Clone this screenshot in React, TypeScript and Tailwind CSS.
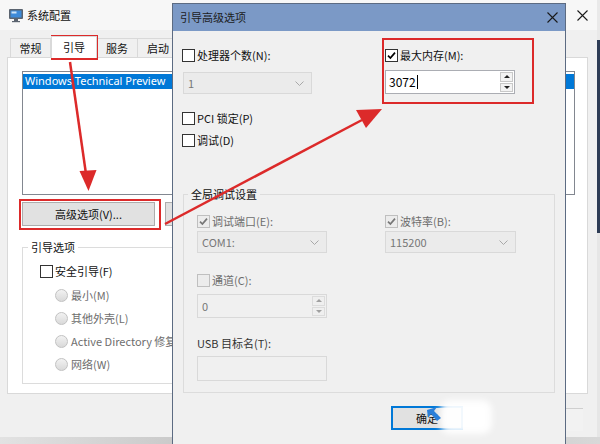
import clsx from "clsx"

const cjk = "font-['Noto_Sans_CJK_SC','Noto_Sans',sans-serif]"

function Check({ checked = false, disabled = false }: { checked?: boolean; disabled?: boolean }) {
  return (
    <span
      className={clsx(
        "flex h-[13px] w-[13px] shrink-0 items-center justify-center border",
        disabled ? "border-[#bfbfbf] bg-[#ececec]" : "border-[#333333] bg-white"
      )}
    >
      {checked && (
        <svg viewBox="0 0 11 11" className="h-[11px] w-[11px]">
          <path d="M2 5.6 L4.4 8 L9 2.6" fill="none" stroke={disabled ? "#777777" : "#000000"} strokeWidth="1.7" />
        </svg>
      )}
    </span>
  )
}

function CheckRow({ label, checked, disabled }: { label: string; checked?: boolean; disabled?: boolean }) {
  return (
    <div className="flex h-[13px] items-center gap-[2px] leading-[13px]">
      <Check checked={checked} disabled={disabled} />
      <span className={disabled ? "text-[#6d6d6d]" : "text-[#111111]"}>{label}</span>
    </div>
  )
}

function RadioRow({ label }: { label: string }) {
  return (
    <div className="flex h-[13px] items-center gap-[3px] whitespace-nowrap leading-[13px] text-[#6d6d6d]">
      <span className="h-[13px] w-[13px] shrink-0 rounded-full border border-[#c2c2c2] bg-gradient-to-b from-[#f2f2f2] to-[#d9d9d9]" />
      <span>{label}</span>
    </div>
  )
}

function Chevron() {
  return (
    <svg width="9" height="5" viewBox="0 0 9 5">
      <path d="M0.5 0.5 L4.5 4.5 L8.5 0.5" fill="none" stroke="#a8a8a8" />
    </svg>
  )
}

function Combo({ value, className }: { value: string; className?: string }) {
  return (
    <div
      className={clsx(
        "flex h-[22px] items-center justify-between border border-[#d9d9d9] bg-[#ebebeb] pl-[4px] pr-[7px] text-[#777777]",
        className
      )}
    >
      <span>{value}</span>
      <Chevron />
    </div>
  )
}

function Arrow({ up, color }: { up?: boolean; color: string }) {
  return (
    <svg width="6" height="3" viewBox="0 0 6 3">
      <path d={up ? "M0 3 L3 0 L6 3Z" : "M0 0 L3 3 L6 0Z"} fill={color} />
    </svg>
  )
}

function SpinButtons({ disabled }: { disabled?: boolean }) {
  const c = disabled ? "#a0a0a0" : "#222222"
  const cell = disabled ? "border-[#dcdcdc] bg-[#efefef]" : "border-[#c8c8c8] bg-[#f3f3f3]"
  return (
    <div className="flex w-[15px] flex-col gap-[1px] self-stretch p-[1px]">
      <div className={clsx("flex flex-1 items-center justify-center border", cell)}>
        <Arrow up color={c} />
      </div>
      <div className={clsx("flex flex-1 items-center justify-center border", cell)}>
        <Arrow color={c} />
      </div>
    </div>
  )
}

function CloseX({ className }: { className?: string }) {
  return (
    <svg viewBox="0 0 11 11" className={clsx("h-[11px] w-[11px]", className)}>
      <path d="M0.5 0.5 L10.5 10.5 M10.5 0.5 L0.5 10.5" stroke="#1a1a1a" strokeWidth="1.1" />
    </svg>
  )
}

function BootDialog() {
  return (
    <div className={clsx("h-[437px] w-[597px] bg-[#f0f0f0] text-[11px] text-[#111111]", cjk)}>
      <div className="flex h-[30px] items-center justify-between bg-[#f7f7f7] pl-[8px] pr-[9px]">
        <div className="flex items-center gap-[3px]">
          <svg viewBox="0 0 16 16" className="h-[16px] w-[16px]">
            <rect x="1" y="2" width="14" height="10" rx="1" fill="#5b6470" />
            <rect x="2.5" y="3.5" width="11" height="7" fill="#3d8ad8" />
            <rect x="3.5" y="4.5" width="5" height="2" fill="#cde3f7" />
            <rect x="6" y="12" width="4" height="2" fill="#5b6470" />
            <rect x="4" y="14" width="8" height="1.2" fill="#5b6470" />
          </svg>
          <span>系统配置</span>
        </div>
        <CloseX />
      </div>

      <div className="pl-[7px] pr-[9px] pt-[6px]">
        <div className="flex h-[21px] items-end pl-[3px]">
          <div className="flex h-[19px] w-[41px] items-center justify-center border border-b-0 border-[#d9d9d9] bg-[#f0f0f0]">常规</div>
          <div className="relative z-10 -mb-px flex h-[22px] w-[46px] items-start justify-center border border-b-0 border-[#d9d9d9] bg-white pt-[2px]">引导</div>
          <div className="flex h-[19px] w-[41px] items-center justify-center border border-b-0 border-l-0 border-[#d9d9d9] bg-[#f0f0f0]">服务</div>
          <div className="flex h-[19px] w-[41px] items-center justify-center border border-b-0 border-l-0 border-[#d9d9d9] bg-[#f0f0f0]">启动</div>
        </div>

        <div className="h-[337px] border border-[#d9d9d9] bg-white pl-[14px] pr-[12px] pt-[13px]">
          <div className="h-[124px] border border-[#828790] bg-white pt-[2px]">
            <div className="flex h-[15px] items-center bg-[#0078d7] pl-[2px] font-['Noto_Sans',sans-serif] text-[11px] text-white">
              Windows Technical Preview
            </div>
          </div>

          <div className="mt-[7px] flex gap-[10px]">
            <div className="flex h-[24px] w-[133px] items-center justify-center border border-[#adadad] bg-[#e1e1e1]">
              高级选项(V)...
            </div>
            <div className="h-[24px] w-[110px] border border-[#adadad] bg-[#e1e1e1]" />
          </div>

          <div className="mt-[13px] flex">
            <fieldset className="w-[280px] border border-[#dcdcdc] px-0 pb-[12px]">
              <legend className="ml-[5px] px-[3px] leading-[16px]">引导选项</legend>
              <div className="pl-[17px] pt-[10px]">
                <CheckRow label="安全引导(F)" />
                <div className="mt-[11px] flex flex-col gap-[10px] pl-[15px]">
                  <RadioRow label="最小(M)" />
                  <RadioRow label="其他外壳(L)" />
                  <RadioRow label="Active Directory 修复" />
                  <RadioRow label="网络(W)" />
                </div>
              </div>
            </fieldset>
            <div className="flex flex-1 justify-end pr-[14px] pt-[88px]">
              <span>秒</span>
            </div>
          </div>
        </div>

        <div className="mt-[14px] flex justify-end pr-[5px]">
          <div className="h-[23px] w-[75px] border-t border-[#cfcfcf] bg-[#f2f2f2]" />
        </div>
      </div>
    </div>
  )
}

function AdvancedDialog() {
  return (
    <div className={clsx("absolute left-[172px] top-[3px] h-[460px] w-[394px] border border-[#5c6b82] bg-[#f0f0f0] text-[11px] text-[#111111]", cjk)}>
      <div className="flex h-[27px] items-center justify-between bg-[#7b99c6] pl-[7px] pr-[7px]">
        <span className="text-[#1c1c1c]">引导高级选项</span>
        <CloseX />
      </div>

      <div className="flex pl-[9px] pt-[18px]">
        <div className="w-[203px]">
          <CheckRow label="处理器个数(N):" />
          <Combo value="1" className="ml-[1px] mt-[10px] w-[129px]" />
          <div className="mt-[18px]">
            <CheckRow label="PCI 锁定(P)" />
          </div>
          <div className="mt-[9px]">
            <CheckRow label="调试(D)" />
          </div>
        </div>
        <div>
          <CheckRow label="最大内存(M):" checked />
          <div className="mt-[8px] flex h-[24px] w-[130px] items-center border border-[#abadb3] bg-white">
            <span className="flex-1 pl-[3px] text-[12px] text-black">
              3072<span className="ml-[1px] inline-block h-[14px] w-px translate-y-[2px] bg-black" />
            </span>
            <SpinButtons />
          </div>
        </div>
      </div>

      <fieldset className="mx-[10px] mt-[39px] border border-[#dcdcdc] px-0 pb-[11px]">
        <legend className="ml-[4px] px-[3px] leading-[16px]">全局调试设置</legend>
        <div className="flex pl-[13px] pt-[13px]">
          <div className="w-[188px]">
            <CheckRow label="调试端口(E):" checked disabled />
            <Combo value="COM1:" className="mt-[3px] w-[130px]" />
            <div className="mt-[21px]">
              <CheckRow label="通道(C):" disabled />
            </div>
            <div className="mt-[7px] flex h-[24px] w-[130px] items-center border border-[#d9d9d9] bg-[#f0f0f0]">
              <span className="flex-1 pl-[4px] text-[#777777]">0</span>
              <SpinButtons disabled />
            </div>
            <div className="mt-[19px] h-[13px] leading-[13px] text-[#333333]">USB 目标名(T):</div>
            <div className="mt-[6px] h-[25px] w-[130px] border border-[#d9d9d9] bg-[#f0f0f0]" />
          </div>
          <div>
            <CheckRow label="波特率(B):" checked disabled />
            <Combo value="115200" className="mt-[3px] w-[131px]" />
          </div>
        </div>
      </fieldset>

      <div className="mt-[13px] flex pl-[218px]">
        <div className="flex h-[24px] w-[72px] items-center justify-center border border-[#0078d7] bg-[#e1e1e1] shadow-[inset_0_0_0_1px_#0078d7]">
          确定
        </div>
      </div>
    </div>
  )
}

export default function App() {
  const red = "#dc2a2a"
  return (
    <div className="relative h-[444px] w-[600px] overflow-hidden bg-[#f0f0f0]">
      <div className="flex">
        <BootDialog />
        <div className="flex h-[437px] w-[3px] flex-col">
          <div className="h-[40px] bg-[#e9e9e9]" />
          <div className="h-[193px] bg-[#2d3c55]" />
          <div className="flex-1 bg-[#e6e6e6]" />
        </div>
      </div>
      <div className="h-[7px] bg-gradient-to-r from-[#e2e2e2] via-[#b9b9b9] to-[#d8d8d8]" />

      <AdvancedDialog />

      {/* watermark smudge and cursor over the OK button */}
      <div className="absolute left-[440px] top-[400px] h-[34px] w-[52px] rounded-[10px] bg-white/95 blur-[3px]" />
      <svg className="absolute left-[426px] top-[406px]" width="16" height="20" viewBox="0 0 16 20">
        <path d="M1 4 L11 1 L8 5 L15 12 L11 15 L5 8 L2 12 Z" fill="#2b7fd9" />
      </svg>

      {/* annotations */}
      <div className="absolute left-[51px] top-[35px] h-[25px] w-[47px] border-2 border-[#dc2a2a]" />
      <div className="absolute left-[19px] top-[199px] h-[31px] w-[142px] border-2 border-[#dc2a2a]" />
      <div className="absolute left-[382px] top-[38px] h-[66px] w-[152px] border-2 border-[#dc2a2a]" />
      <svg className="pointer-events-none absolute left-0 top-0" width="600" height="444" viewBox="0 0 600 444">
        <line x1="70" y1="62" x2="86" y2="174" stroke={red} strokeWidth="2.5" />
        <polygon points="88.5,191 79.5,171 96.5,170" fill={red} />
        <line x1="165" y1="224" x2="362" y2="120" stroke={red} strokeWidth="2.5" />
        <polygon points="382,109 366,128 356,110" fill={red} />
      </svg>
    </div>
  )
}
